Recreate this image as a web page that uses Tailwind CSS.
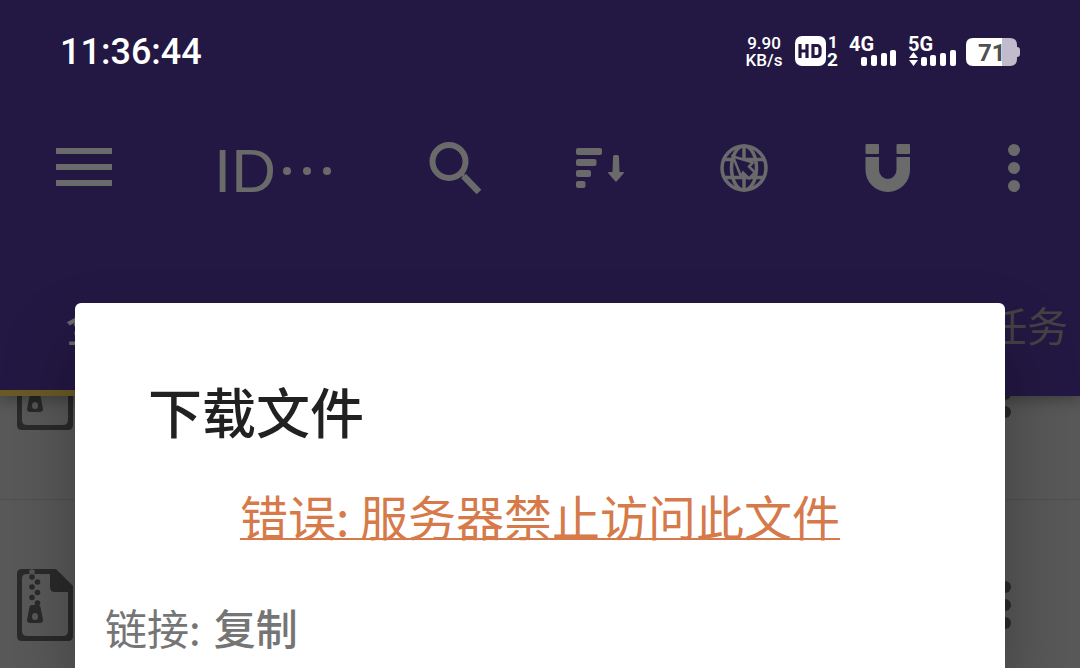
<!DOCTYPE html>
<html lang="zh-CN">
<head>
    <meta charset="UTF-8">
    <meta name="viewport" content="width=device-width, initial-scale=1.0">
    <title>下载文件</title>
    <script src="https://cdn.jsdelivr.net/npm/@tailwindcss/browser@4"></script>
</head>
<body class="bg-[#595959] font-['Roboto','Noto_Sans_CJK_SC',sans-serif]">
<div class="relative h-screen overflow-hidden">

    <!-- App header -->
    <header class="relative z-10 bg-[#231843] text-[#6a6a6b] shadow-[0_4px_14px_rgba(0,0,0,0.3)]">
        <!-- Status bar -->
        <div class="flex h-[104px] items-center justify-between px-[60px] text-white">
            <time class="text-[36px] leading-none font-medium">11:36:44</time>
            <div class="flex items-center">
                <div class="w-[40px] text-center text-[17px] leading-[17px] font-medium">
                    <div>9.90</div>
                    <div>KB/s</div>
                </div>
                <!-- HD voice -->
                <svg class="ml-[11px] h-[32px] w-[45px] overflow-visible" viewBox="0 0 45 32" fill="#fff" font-weight="700">
                    <rect x="0" y="0" width="31" height="30" rx="7"/>
                    <path d="M5 8v14M12 8v14M5 15h7M18 9.500v11h4a3 3 0 0 0 3-3v-5a3 3 0 0 0-3-3z" fill="none" stroke="#231843" stroke-width="3.200"/>
                    <text x="33" y="12" font-size="17">1</text>
                    <text x="32" y="30" font-size="19">2</text>
                </svg>
                <!-- Signal, SIM 1 -->
                <svg class="ml-[9px] h-[32px] w-[48px] overflow-visible" viewBox="0 0 48 32" fill="#fff" font-weight="700">
                    <text x="0" y="15" font-size="20">4G</text>
                    <rect x="12" y="21" width="6" height="9" rx="2"/>
                    <rect x="22" y="19" width="6" height="11" rx="2"/>
                    <rect x="32" y="17" width="6" height="13" rx="2"/>
                    <rect x="41" y="14" width="6" height="16" rx="2"/>
                </svg>
                <!-- Signal, SIM 2 -->
                <svg class="ml-[11px] h-[32px] w-[49px] overflow-visible" viewBox="0 0 49 32" fill="#fff" font-weight="700">
                    <text x="0" y="15" font-size="20">5G</text>
                    <path d="M1 22 5.500 16 10 22zM1 24h9l-4.500 6z"/>
                    <rect x="13" y="21" width="6" height="9" rx="2"/>
                    <rect x="22" y="19" width="6" height="11" rx="2"/>
                    <rect x="32" y="17" width="6" height="13" rx="2"/>
                    <rect x="42" y="14" width="6" height="16" rx="2"/>
                </svg>
                <!-- Battery -->
                <svg class="ml-[9px] h-[28px] w-[54px]" viewBox="0 0 54 28">
                    <path d="M36 0h8q7 0 7 7v2q3 0 3 3v4q0 3-3 3v2q0 7-7 7h-8z" fill="#c0bccb"/>
                    <path d="M7 0h29v28H7q-7 0-7-7V7q0-7 7-7z" fill="#fff"/>
                    <text x="12" y="23" font-size="24" font-weight="700" fill="#505050">71</text>
                </svg>
            </div>
        </div>

        <!-- Toolbar -->
        <div class="flex h-[128px] items-center pr-[12px]">
            <button type="button" aria-label="菜单" class="flex w-[168px] justify-center">
                <svg class="h-[40px] w-[56px]" viewBox="0 0 56 40" fill="currentColor"><path d="M0 0h56v6H0zM0 16h56v6H0zM0 32h56v6H0z"/></svg>
            </button>
            <h1 class="flex min-w-0 flex-1 items-center pt-[6px] pl-[46px] font-['Liberation_Sans',sans-serif] text-[62px] leading-none">ID
                <svg class="ml-[7px] h-[8px] w-[48px]" viewBox="0 0 48 8" fill="currentColor"><circle cx="4" cy="4" r="4"/><circle cx="24" cy="4" r="4"/><circle cx="44" cy="4" r="4"/></svg>
            </h1>
            <button type="button" aria-label="搜索" class="flex w-[144px] justify-center">
                <svg class="h-[54px] w-[54px]" viewBox="0 0 54 54" fill="none" stroke="currentColor"><circle cx="20" cy="20.500" r="16.500" stroke-width="6"/><path d="M33 32l2.500 1M34.500 35 50 51" stroke-width="6.500"/></svg>
            </button>
            <button type="button" aria-label="排序" class="flex w-[144px] justify-center">
                <svg class="h-[40px] w-[48px]" viewBox="0 0 48 40" fill="currentColor">
                    <rect width="26" height="7" rx="2"/><rect y="11" width="20.500" height="7" rx="2"/><rect y="22" width="15" height="7" rx="2"/><rect y="33" width="9.500" height="7" rx="2"/>
                    <path d="M38.500 7h3q1.500 0 1.500 2l.5 15H47q1.500 0 .5 1.500l-6.500 7.500q-1 1-2 0l-6.500-7.500Q31.500 24 33 24h3.500L37 9q0-2 1.500-2z"/>
                </svg>
            </button>
            <button type="button" aria-label="浏览器" class="flex w-[144px] justify-center">
                <svg class="h-[48px] w-[48px]" viewBox="0 0 48 48" fill="none" stroke="currentColor" stroke-width="3.500">
                    <circle cx="24" cy="24" r="22"/>
                    <ellipse cx="24" cy="24" rx="12.500" ry="22"/>
                    <path d="M24 2v44M5 15.500h38M5 33.500h38"/>
                    <path d="M21 32.500 13 12.500 33 18.500 29 22.500 35 28.500 29 34.500 23 28.500z" fill="#231843" stroke-width="2.500"/>
                </svg>
            </button>
            <button type="button" aria-label="磁力链接" class="flex w-[144px] justify-center">
                <svg class="h-[48px] w-[46px]" viewBox="0 0 46 48" fill="currentColor"><rect x="0.500" width="13.500" height="10" rx="1"/><rect x="31.500" width="13.500" height="10" rx="1"/><path d="M.5 13H14v13a8.750 9 0 0 0 17.500 0V13H45v13a22.250 22 0 0 1-44.500 0z"/></svg>
            </button>
            <button type="button" aria-label="更多" class="flex w-[108px] justify-center">
                <svg class="h-[48px] w-[12px]" viewBox="0 0 12 48" fill="currentColor"><circle cx="6" cy="6" r="6"/><circle cx="6" cy="24" r="6"/><circle cx="6" cy="42" r="6"/></svg>
            </button>
        </div>

        <!-- Tabs -->
        <nav class="flex items-end justify-between text-[41px] leading-[60px] font-medium">
            <a href="#all" class="border-b-6 border-[#6b5a26] px-[66px] pt-[66px] pb-[32px]">全部</a>
            <a href="#tasks" class="border-b-6 border-transparent pt-[66px] pr-[12px] pb-[32px] font-normal text-[#444244]">任务</a>
        </nav>
    </header>

    <!-- Download list -->
    <ul class="-mt-[108px] text-[#2a2a2a]">
        <li class="flex h-[212px] items-center justify-between border-b border-[#505050] pl-[17px] pr-[69px]">
            <svg class="h-[72px] w-[56px]" viewBox="0 0 56 72" fill="currentColor">
                <path fill-rule="evenodd" d="M5 0h34l17 17v50q0 5-5 5H5q-5 0-5-5V5q0-5 5-5zm5 5q-5 0-5 5v52q0 5 5 5h36q5 0 5-5V23H38q-5 0-5-5V5z"/>
                <path fill-rule="evenodd" d="M15 36h6q2 0 2.500 2L26 51q0 3-3 3H13q-3 0-3-3l2.500-13q.5-2 2.500-2zm3 8q-3 0-3 3.500t3 3.500 3-3.500-3-3.500z"/>
            </svg>
            <svg class="h-[48px] w-[12px]" viewBox="0 0 12 48" fill="currentColor"><circle cx="6" cy="6" r="6"/><circle cx="6" cy="24" r="6"/><circle cx="6" cy="42" r="6"/></svg>
        </li>
        <li class="flex h-[210px] items-center justify-between pl-[17px] pr-[69px]">
            <svg class="h-[72px] w-[56px]" viewBox="0 0 56 72" fill="currentColor">
                <path fill-rule="evenodd" d="M5 0h34l17 17v50q0 5-5 5H5q-5 0-5-5V5q0-5 5-5zm5 5q-5 0-5 5v52q0 5 5 5h36q5 0 5-5V23H38q-5 0-5-5V5z"/>
                <path fill-rule="evenodd" d="M15 36h6q2 0 2.500 2L26 51q0 3-3 3H13q-3 0-3-3l2.500-13q.5-2 2.500-2zm3 8q-3 0-3 3.500t3 3.500 3-3.500-3-3.500z"/>
                <circle cx="15" cy="3" r="2.800" fill="#555"/>
                <circle cx="15" cy="8" r="2.800"/><circle cx="20.500" cy="13" r="2.800"/><circle cx="15" cy="18" r="2.800"/><circle cx="20.500" cy="23.500" r="2.800"/><circle cx="15" cy="28.500" r="2.800"/><circle cx="20.500" cy="34" r="2.800"/>
            </svg>
            <svg class="h-[48px] w-[12px]" viewBox="0 0 12 48" fill="currentColor"><circle cx="6" cy="6" r="6"/><circle cx="6" cy="24" r="6"/><circle cx="6" cy="42" r="6"/></svg>
        </li>
    </ul>

    <!-- Dialog -->
    <div role="dialog" aria-labelledby="dialog-title" class="absolute inset-x-[75px] top-[303px] bottom-0 z-20 rounded-t-[6px] bg-white font-['Noto_Sans_CJK_SC',sans-serif] shadow-[0_40px_72px_rgba(0,0,0,0.3)]">
        <h2 id="dialog-title" class="px-[73px] pt-[68px] text-[54px] leading-[80px] font-medium text-[#212121]">下载文件</h2>
        <p class="pt-[28px] text-center text-[48px] leading-[72px]">
            <a href="#error" class="text-[#d67a4a] underline decoration-2 underline-offset-2">错误: 服务器禁止访问此文件</a>
        </p>
        <p class="flex gap-[13px] px-[30px] pt-[46px] text-[42px] leading-[60px] text-[#757575]">
            <span>链接:</span>
            <button type="button" class="font-medium">复制</button>
        </p>
    </div>
</div>
</body>
</html>
